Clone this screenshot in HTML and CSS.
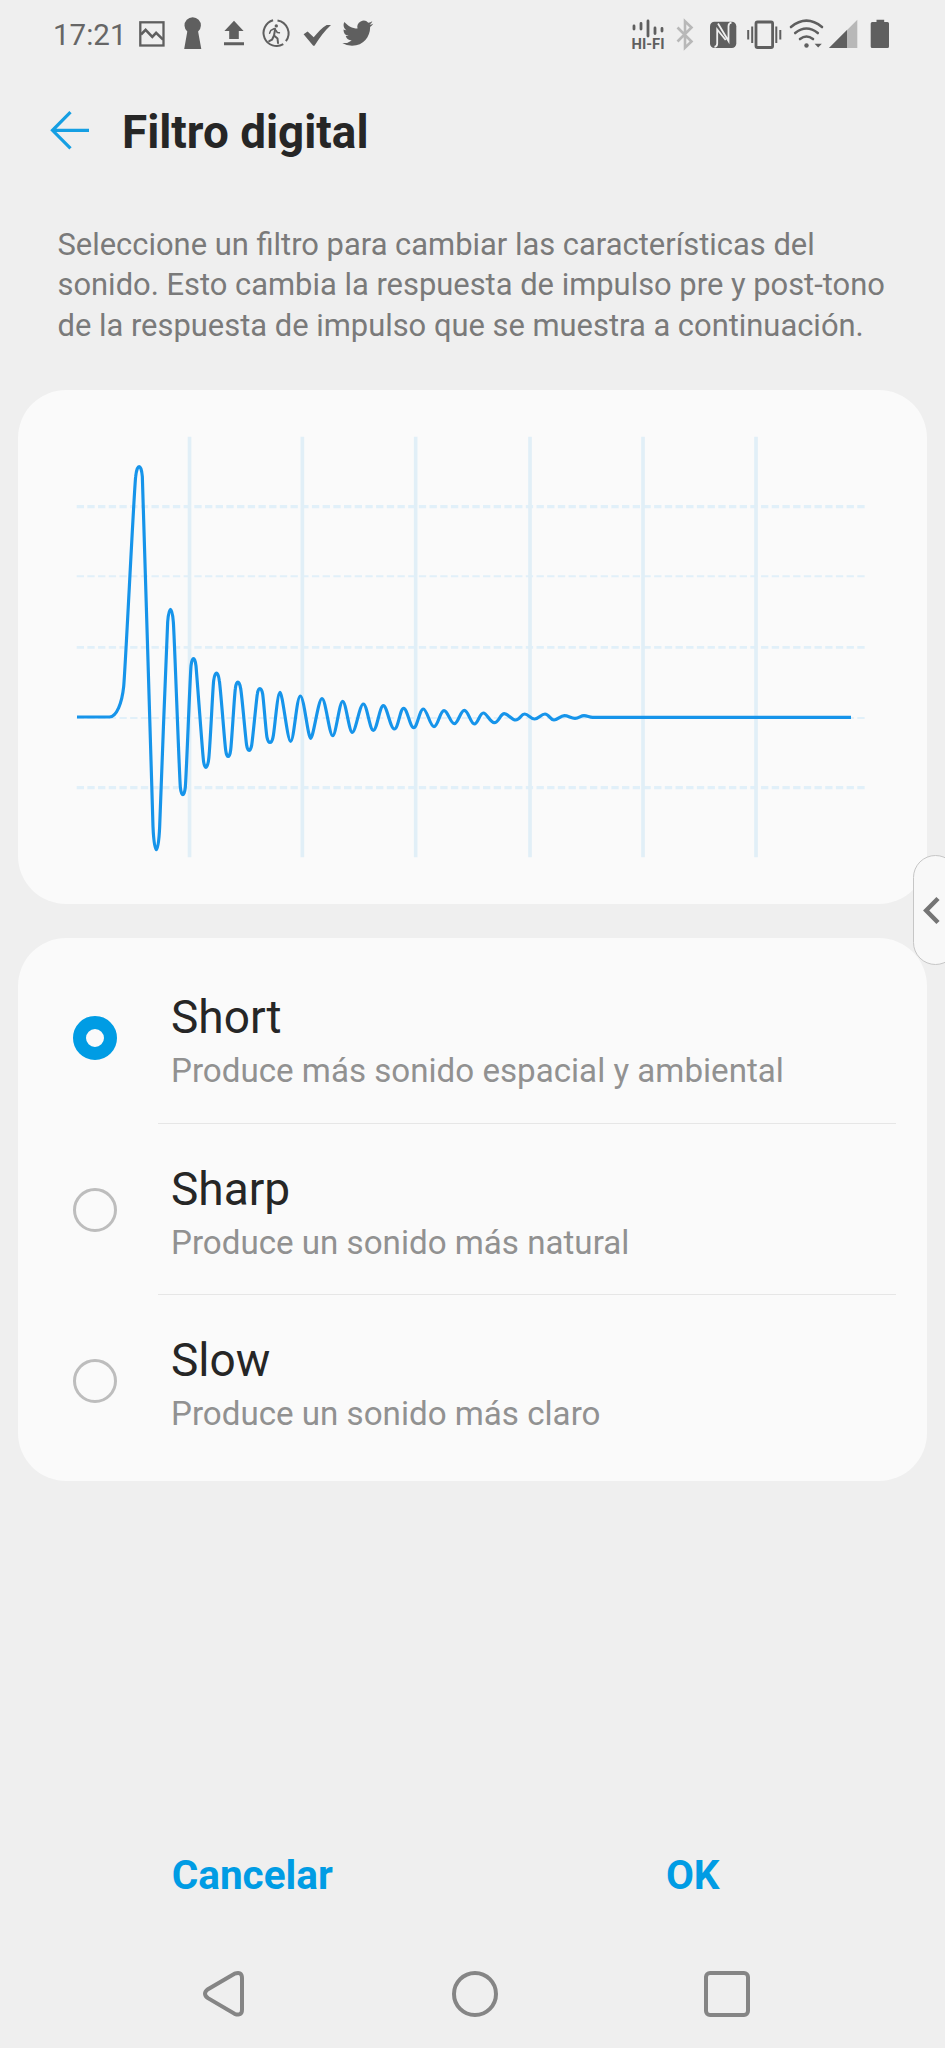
FILE: index.html
```html
<!DOCTYPE html>
<html lang="es">
<head>
<meta charset="utf-8">
<title>Filtro digital</title>
<link rel="stylesheet" href="styles.css">
</head>
<body>
<div class="screen">
  <div class="status-bar">
    <div class="status-group">
      <span class="clock">17:21</span>
      <svg width="42" height="70" viewBox="132 0 42 70"><rect x="140.3" y="22.3" width="23.2" height="23.2" fill="none" stroke="#5f5f5f" stroke-width="2.3"/><path d="M141 34.5l4.6-4.6 6.7 6.9 3.8-4 7 6.8" fill="none" stroke="#5f5f5f" stroke-width="2.6"/></svg>
      <svg width="38" height="70" viewBox="174 0 38 70"><path d="M187.3 31.5a8.2 8.2 0 1 1 10.8 0L201.3 49H184.2z" fill="#5f5f5f"/></svg>
      <svg width="40" height="70" viewBox="212 0 40 70"><path d="M234 20.7l9.6 10.3h-4.8v8h-9.6v-8h-4.8zM224 42.3h20v2.900h-20z" fill="#5f5f5f"/></svg>
      <svg width="45" height="70" viewBox="252 0 45 70"><g fill="none" stroke="#5f5f5f" stroke-linecap="round" stroke-linejoin="round"><path d="M273.1 20.3A13.1 13.1 0 1 0 283.3 44.2M285.9 41.2A13.1 13.1 0 0 0 277.5 20.4" stroke-width="2" stroke-linecap="butt"/><path d="M275.2 29l-1.2 6.500 3.500 3 .5 4.500M274 35.500l-2 4.200-2.800 1.500" stroke-width="2"/><path d="M274.500 28.500l-3.700 1.800-1.200 3M276 30.500l1.300 2 2.100.3" stroke-width="1.500"/></g><circle cx="276.300" cy="25.900" r="1.700" fill="#5f5f5f"/></svg>
      <svg width="40" height="70" viewBox="297 0 40 70"><path d="M303.6 34.3l4-2.800 6.100 5.800c4-5 8.500-9.700 13-12.400h4.300c-6.300 5.600-11.500 12.600-16.500 20.800h-1.300z" fill="#5f5f5f"/></svg>
      <svg width="43" height="70" viewBox="337 0 43 70"><path transform="translate(342.300 17.800) scale(1.290)" d="M23.953 4.570a10 10 0 0 1-2.825.775 4.958 4.958 0 0 0 2.163-2.723c-.951.555-2.005.959-3.127 1.184a4.920 4.920 0 0 0-8.384 4.482C7.690 8.095 4.067 6.130 1.640 3.162a4.822 4.822 0 0 0-.666 2.475c0 1.710.870 3.213 2.188 4.096a4.904 4.904 0 0 1-2.228-.616v.060a4.923 4.923 0 0 0 3.946 4.827 4.996 4.996 0 0 1-2.212.085 4.936 4.936 0 0 0 4.604 3.417 9.867 9.867 0 0 1-6.102 2.105c-.390 0-.779-.023-1.170-.067a13.995 13.995 0 0 0 7.557 2.209c9.053 0 13.998-7.496 13.998-13.985 0-.210 0-.420-.015-.630A9.935 9.935 0 0 0 24 4.590z" fill="#5f5f5f"/></svg>
    </div>
    <div class="status-group">
      <svg width="44" height="70" viewBox="626 0 44 70"><path d="M634 26v3M641 23.500v5.500M648 21v15M655 28v5.500M662 28.500v2.500" stroke="#5f5f5f" stroke-width="2.800" fill="none" stroke-linecap="round"/><text x="631.500" y="48.700" class="hifi" textLength="33" lengthAdjust="spacingAndGlyphs">HI-FI</text></svg>
      <svg width="30" height="70" viewBox="670 0 30 70"><path d="M677.500 27.500l14 14-6.500 6.300V21.300l6.500 6.200-14 14" stroke="#b8b8b8" stroke-width="2.600" fill="none"/></svg>
      <svg width="42" height="70" viewBox="700 0 42 70"><rect x="710" y="21.700" width="26.300" height="26.300" rx="4.500" fill="#5f5f5f"/><path d="M714.500 47q2.700-.5 2.700-3.500V29.500l8.500 10.500M731.500 22.700q-3 .5-3 3.500V41L718 23.500" fill="none" stroke="#efefef" stroke-width="1.800"/></svg>
      <svg width="44" height="70" viewBox="742 0 44 70"><rect x="756" y="22" width="16.600" height="25.500" rx="1.500" fill="none" stroke="#5f5f5f" stroke-width="2.800"/><path d="M748.200 30v9.500M752.200 26.500v16.500M776.300 26.500v16.500M780.300 30v9.500" stroke="#5f5f5f" stroke-width="2"/></svg>
      <svg width="40" height="70" viewBox="786 0 40 70"><path d="M791 27q15.400-12.600 31 0M795.200 33q11.200-9 22.600 0M800 39q6.500-5 13 0" fill="none" stroke="#5f5f5f" stroke-width="2.600" stroke-linecap="round"/><circle cx="806.500" cy="45.500" r="2.200" fill="#5f5f5f"/><path d="M814.600 43.700h7.200l-3.600 3.700z" fill="#5f5f5f"/></svg>
      <svg width="36" height="70" viewBox="826 0 36 70"><path d="M857.300 19.700V48H829z" fill="#b8b8b8"/><path d="M847 30v18h-18z" fill="#5f5f5f"/></svg>
      <svg width="40" height="70" viewBox="862 0 40 70"><path d="M876.500 19.700h7.700v2.200h3.300q1.500 0 1.500 1.500v23.100q0 1.500-1.500 1.500h-15.300q-1.500 0-1.500-1.500V23.400q0-1.500 1.500-1.500h4.300z" fill="#5f5f5f"/></svg>
    </div>
  </div>

  <header class="header">
    <svg class="back" width="42" height="42" viewBox="49 109.500 42 42"><path d="M89 130.800H53M70.500 112.700l-18 18.100 18 18.100" fill="none" stroke="#159fe3" stroke-width="3.200"/></svg>
    <h1 class="title">Filtro digital</h1>
  </header>

  <p class="description">Seleccione un filtro para cambiar las características del<br>sonido. Esto cambia la respuesta de impulso pre y post-tono<br>de la respuesta de impulso que se muestra a continuación.</p>

  <section class="card chart-card">
    <svg class="chart" viewBox="54 30 2727 1542">
      <g stroke="#e1f0f9" stroke-dasharray="22 10.080">
        <path d="M230 380H2596M230 1223H2596" stroke-width="10"/>
        <path d="M230 802H2596" stroke-width="8"/>
        <path d="M230 589H2596M230 1014H2596" stroke-width="6"/>
      </g>
      <path d="M568.500 170V1432M907 170V1432M1247 170V1432M1590 170V1432M1929 170V1432M2268 170V1432" stroke="#e1eff7" stroke-width="11"/>
      <path class="wave" d="M231 1011H328C350 1011 366 968 371 920C376 872 402 330 407 290C411 250 424 250 427 290C430 330 455 1250 459 1340C463 1432 475 1432 479 1340C483 1250 500 760 503 726C507 675 516 675 520 726C523 760 538 1190 541 1221C544 1252 553 1252 556 1221C559 1190 570 890 573 858C576 828 585 828 588 858C591 890 607 1112 610 1138C613 1170 622 1170 626 1138C630 1112 638 926 641 902C645 872 654 872 658 902C662 926 674 1090 677 1110C680 1136 689 1136 692 1110C695 1090 703 946 706 926C709 900 718 900 722 926C726 946 737 1080 740 1096C743 1116 751 1116 755 1096C758 1080 769 960 772 942C775 920 784 920 788 942C791 960 798 1060 801 1072C805 1092 815 1092 819 1072C823 1060 832 937 840 937S862 1084 872 1084S890 948 901 948S924 1075 932 1075S955 956 966 956S988 1067 998 1067S1018 964 1028 964S1047 1057 1057 1057S1079 972 1090 972S1109 1051 1120 1051S1139 977 1150 977S1171 1047 1183 1047S1200 985 1211 985S1230 1043 1241 1043S1259 987 1270 987S1290 1040 1302 1040S1320 992 1332 992S1351 1031 1363 1031S1381 991 1393 991S1412 1032 1423 1032S1439 999 1450 999S1470 1028 1483 1028S1501 1001 1513 1001S1534 1020 1547 1020S1563 1002 1574 1002S1592 1017 1604 1017S1623 1002 1635 1002S1651 1020 1662 1020S1681 1007 1693 1007S1713 1015 1725 1015S1742 1007 1752 1007S1768 1012 1778 1012H2553"/>
    </svg>
  </section>

  <section class="card options">
    <div class="option">
      <span class="radio radio-on"></span>
      <div class="option-body"><div class="option-name">Short</div><div class="option-note">Produce más sonido espacial y ambiental</div></div>
    </div>
    <div class="option">
      <span class="radio"></span>
      <div class="option-body"><div class="option-name">Sharp</div><div class="option-note">Produce un sonido más natural</div></div>
    </div>
    <div class="option">
      <span class="radio"></span>
      <div class="option-body"><div class="option-name">Slow</div><div class="option-note">Produce un sonido más claro</div></div>
    </div>
  </section>

  <div class="actions"><button class="action">Cancelar</button><button class="action">OK</button></div>

  <nav class="nav">
    <svg width="50" height="50" viewBox="199 1968.500 50 50"><path d="M234.500 1973.200L208 1988.700Q202 1993.200 208 1997.700L234.500 2013.300Q242 2016 242 2009V1977.500Q242 1970.500 234.500 1973.200Z"/></svg>
    <svg width="50" height="50" viewBox="0 0 50 50"><circle cx="25" cy="25" r="21"/></svg>
    <svg width="50" height="50" viewBox="0 0 50 50"><rect x="4" y="4" width="42" height="42" rx="4"/></svg>
  </nav>

  <div class="edge-handle"><svg width="31" height="108" viewBox="914 856 31 108"><path d="M938 898.500l-11.800 12 11.800 12" fill="none" stroke="#757575" stroke-width="4.500"/></svg></div>
</div>
</body>
</html>
```
FILE: styles.css
```css
* { box-sizing: border-box; }
body { margin: 0; background: #efefef; font-family: Roboto, "Liberation Sans", sans-serif; }
svg { display: block; flex: none; }
.screen { position: relative; width: 945px; height: 2048px; display: flex; flex-direction: column; background: #efefef; overflow: hidden; }
.status-bar { height: 70px; flex: none; display: flex; justify-content: space-between; padding: 0 43px 0 53px; }
.status-group { display: flex; align-items: center; }
.clock { width: 79px; font-size: 29.5px; line-height: 70px; color: #666; }
.hifi { font: bold 14.5px Roboto, sans-serif; fill: #5f5f5f; }
.header { height: 120px; flex: none; display: flex; align-items: center; padding-left: 49px; gap: 31px; }
.title { margin: 6px 0 0; font-size: 45.8px; line-height: 54px; font-weight: 700; color: #262626; }
.description { margin: 0; height: 200px; flex: none; padding: 34.5px 0 0 57.5px; font-size: 30.9px; line-height: 40.8px; color: #7a7a7a; white-space: nowrap; }
.card { margin: 0 18px; flex: none; background: #fafafa; border-radius: 48px; }
.chart-card { height: 514px; }
.chart { width: 909px; height: 514px; }
.wave { fill: none; stroke: #1694ea; stroke-width: 9.5; stroke-linejoin: round; }
.options { margin-top: 34px; padding: 14px 31px 14px 54px; height: 543px; }
.option { height: 171.7px; display: flex; align-items: center; gap: 41px; }
.radio { width: 44px; height: 44px; margin: 0 0 0 1px; flex: none; border: 3px solid #bdbdbd; border-radius: 50%; }
.radio-on { border: 13px solid #009ce4; }
.option-body { flex: 1; align-self: stretch; padding: 38px 0 0 13px; border-bottom: 1px solid #e6e6e6; white-space: nowrap; }
.option:last-child .option-body { border-bottom: 0; }
.option-name { font-size: 46px; line-height: 54px; color: #262626; }
.option-note { font-size: 33.15px; line-height: 53px; color: #919191; }
.actions { margin-top: 354px; height: 80px; flex: none; display: flex; padding: 0 32px; }
.action { flex: 1; border: 0; background: none; padding: 0; font: 700 40.5px Roboto, sans-serif; color: #009ce4; }
.nav { margin-top: auto; height: 109px; flex: none; display: flex; align-items: center; justify-content: space-between; padding: 0 193.5px 0 199px; }
.nav svg { fill: none; stroke: #858585; stroke-width: 4; }
.edge-handle { position: absolute; right: -13px; top: 855px; width: 45px; height: 110px; border: 1.5px solid #c6c6c6; border-radius: 34px; background: #f8f8f8; }
```
